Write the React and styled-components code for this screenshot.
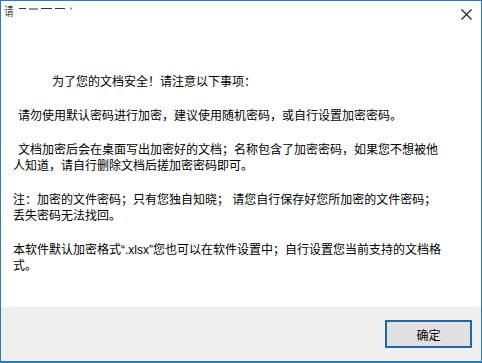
import React from 'react'
import styled, { createGlobalStyle } from 'styled-components'

const GlobalStyle = createGlobalStyle`
    html, body {
        margin: 0;
        padding: 0;
        background: #ffffff;
    }
    * {
        box-sizing: border-box;
    }
`

const paragraphs = [
    { indent: 39, lines: ['为了您的文档安全！请注意以下事项：'] },
    { indent: 5, lines: ['请勿使用默认密码进行加密，建议使用随机密码，或自行设置加密密码。'] },
    {
        indent: 5,
        lines: [
            '文档加密后会在桌面写出加密好的文档；名称包含了加密密码，如果您不想被他',
            '人知道，请自行删除文档后搓加密密码即可。',
        ],
    },
    {
        indent: 0,
        lines: [
            '注：加密的文件密码；只有您独自知晓； 请您自行保存好您所加密的文件密码；',
            '丢失密码无法找回。',
        ],
    },
    {
        indent: 0,
        lines: [
            '本软件默认加密格式“.xlsx”您也可以在软件设置中；自行设置您当前支持的文档格',
            '式。',
        ],
    },
]

// the title is drawn broken in the original: only a few top strokes remain
const TitleRemnant = () => (
    <svg width="64" height="4" viewBox="0 0 64 4">
        <path d="M1 1.5 H8 M11 2 H20 M23 1.5 H34 M37 1.5 H47 M53 0.5 V2.5" stroke="#333" strokeWidth="1" fill="none" />
    </svg>
)

const App = () => {
    return (
        <>
            <GlobalStyle />
            <Window>
                <TitleBar>
                    <TitleGlyph>请</TitleGlyph>
                    <TitleRemnant />
                    <CloseButton aria-label="close">
                        <svg width="11" height="11" viewBox="0 0 11 11">
                            <path d="M0.5 0.5 L10.5 10.5 M10.5 0.5 L0.5 10.5" stroke="#1a1a1a" strokeWidth="1.1" fill="none" />
                        </svg>
                    </CloseButton>
                </TitleBar>
                <Body>
                    {paragraphs.map((p, i) => (
                        <Paragraph key={i} indent={p.indent}>
                            {p.lines.map((line, j) => (
                                <Line key={j}>{line}</Line>
                            ))}
                        </Paragraph>
                    ))}
                </Body>
                <Footer>
                    <OkButton>确定</OkButton>
                </Footer>
            </Window>
        </>
    )
}

export default App

const Window = styled.div`
    width: 482px;
    height: 363px;
    border: 1px solid #2b7bc2;
    border-bottom-width: 2px;
    display: flex;
    flex-direction: column;
    background: #ffffff;
    font-family: "Liberation Sans", "Noto Sans CJK SC", sans-serif;
    font-size: 12px;
    color: #000000;
    overflow: hidden;
`

const TitleBar = styled.div`
    height: 30px;
    flex: none;
    display: flex;
    align-items: flex-start;
    padding: 4px 9px 0 3px;

    & > svg {
        margin-top: 2px;
    }
`

const TitleGlyph = styled.span`
    font-size: 12px;
    line-height: 14px;
    color: #444444;
    display: inline-block;
    transform: scaleX(0.8);
    transform-origin: left center;
    margin-right: 2px;
`

const CloseButton = styled.div`
    margin-left: auto;
    margin-top: 4px;
    width: 11px;
    height: 11px;
    display: flex;
`

const Body = styled.div`
    flex: 1;
    padding: 43px 12px 0 12px;
    display: flex;
    flex-direction: column;
    gap: 18px;
`

const Paragraph = styled.div`
    display: flex;
    flex-direction: column;
    & > div:first-child {
        padding-left: ${props => props.indent}px;
    }
`

const Line = styled.div`
    line-height: 16px;
    height: 16px;
    white-space: nowrap;
`

const Footer = styled.div`
    height: 54px;
    flex: none;
    background: #f0f0f0;
    display: flex;
    justify-content: flex-end;
    align-items: flex-start;
    padding: 13px 9px 0 0;
`

const OkButton = styled.button`
    width: 87px;
    height: 28px;
    background: #e1e1e1;
    border: 2px solid #2067b0;
    border-radius: 0;
    font-family: "Liberation Sans", "Noto Sans CJK SC", sans-serif;
    font-size: 12px;
    color: #000000;
    padding: 0;
    cursor: pointer;
`
